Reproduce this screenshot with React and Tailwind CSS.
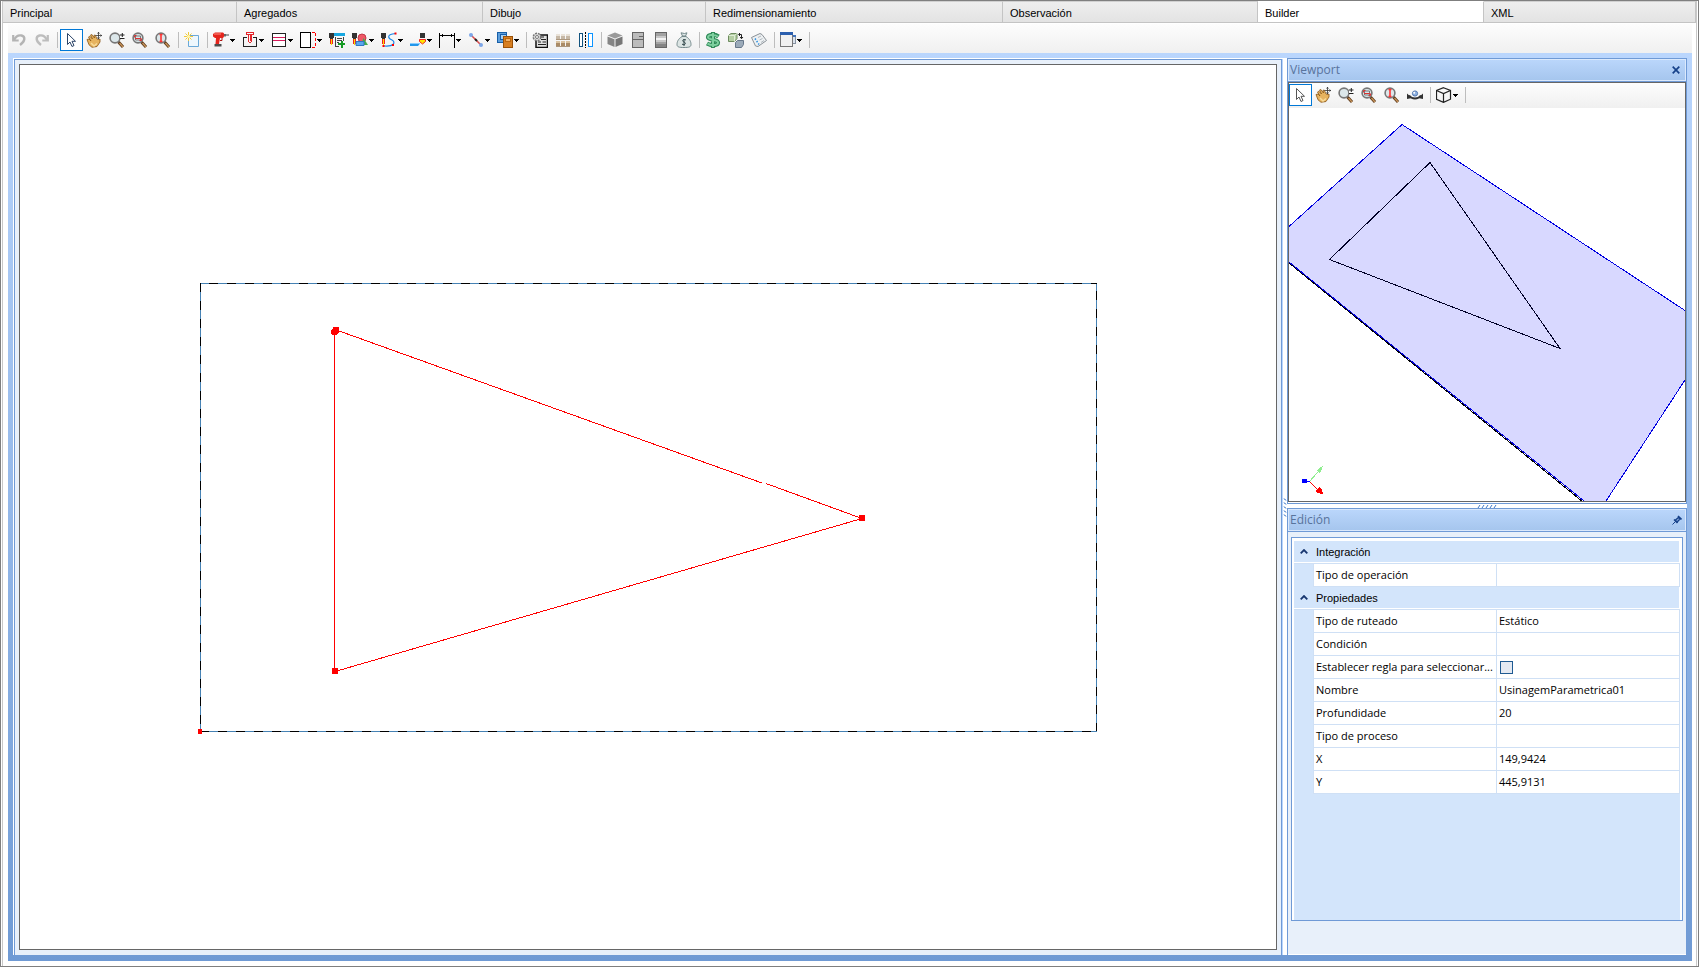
const TABS = [
  { label: 'Principal', width: 'w-[234px]' },
  { label: 'Agregados', width: 'w-[246px]' },
  { label: 'Dibujo', width: 'w-[223px]' },
  { label: 'Redimensionamiento', width: 'w-[297px]' },
  { label: 'Observación', width: 'w-[255px]' },
  { label: 'Builder', width: 'w-[226px]', active: true },
  { label: 'XML', width: 'flex-1' },
]

/* ---------- icons ---------- */

const Svg = ({ children, crisp }) => (
  <svg viewBox="0 0 16 16" className="size-4 shrink-0" fill="none" shapeRendering={crisp ? 'crispEdges' : 'auto'} aria-hidden="true">
    {children}
  </svg>
)

const Undo = () => (
  <Svg>
    <path d="M2.200 3v5.500h5.500" stroke="#b4b4b4" strokeWidth="2.200" />
    <path d="M3 8C5 4 8 3 10.500 3.500c4 1 4 5.500-1.500 9.500" stroke="#b4b4b4" strokeWidth="2.400" />
  </Svg>
)

const Redo = () => (
  <Svg>
    <path d="M13.800 3v5.500H8.300" stroke="#bdbdbd" strokeWidth="2.200" />
    <path d="M13 8C11 4 8 3 5.500 3.500c-4 1-4 5.500 1.500 9.500" stroke="#bdbdbd" strokeWidth="2.400" />
  </Svg>
)

const Cursor = ({ color = '#2b4468' }) => (
  <Svg>
    <path d="M4.500 1.500v11l2.500-2.500 2 4.500 2-1-2-4.200h3.500z" fill="#fff" stroke={color} />
  </Svg>
)

const Hand = () => (
  <Svg>
    <path d="M1 7.500 3 7l2 2-2.500-4 1.300-.8L6.500 7 4.500 3l1.400-.5L8.500 6 8 3.200h1.300L11 7l2 .5 1-.5v3l-3 4.500-5 .8-3-2.500z" fill="#e6b35f" stroke="#8a5514" strokeWidth=".8" />
    <path d="m5 11 3 3 3-2.500" stroke="#f8dc9c" strokeWidth="1.500" />
    <path d="M12.500 0v7M9.500 3.500H16M11.500 1.500l1-1.200 1 1.200M11.500 5.500l1 1.200 1-1.200M14.500 2.500l1.200 1-1.200 1" stroke="#333" strokeWidth=".8" />
  </Svg>
)

const Lens = ({ children }) => (
  <Svg>
    <path d="m9.500 10 4.500 5" stroke="#5c3a1c" strokeWidth="3" />
    <path d="m10.500 11 3.500 4" stroke="#c9955a" strokeWidth="1.300" />
    <circle cx="6" cy="6" r="4.900" fill="#dce7ea" stroke="#777" strokeWidth="1.600" />
    {children}
  </Svg>
)

const ZoomPlusMinus = () => (
  <Lens>
    <path d="M11 0h5v7h-5z" fill="#fcfcfc" />
    <path d="M11 3h4.500M13.300 1v4M11 6.500h4.500" stroke="#222" />
  </Lens>
)

const ZoomWindow = () => (
  <Lens>
    <path d="M3.500 4h5v4h-5z" stroke="#777" />
    <path d="M2.500 5.500v-2h2M9.500 6.500v2h-2M3 6.500h6" stroke="#d33" />
  </Lens>
)

const ZoomHeight = () => (
  <Lens>
    <path d="M6 2.500v7M4.500 2.500h3M4.500 9.500h3" stroke="#f33" strokeWidth="1.600" />
  </Lens>
)

const NewSheet = () => (
  <Svg>
    <path d="M4.500 3.500h10v11h-10z" fill="#eef7fd" stroke="#6aa9d8" />
    <path d="M4.500 0v9M0 4.500h9M1.500 1.500l6 6M7.500 1.500l-6 6" stroke="#efc93b" />
    <circle cx="4.500" cy="4.500" r="1.600" fill="#fff6b0" />
  </Svg>
)

const Drill = () => (
  <Svg>
    <path d="M0 2 2 .5h8l1 1v3l-1 1.500H2L0 4.500z" fill="#e4241c" />
    <path d="M1 2h7" stroke="#ff8d80" />
    <path d="M11 2h2v2.500h-2z" fill="#666" />
    <path d="M13 3h3" stroke="#444" />
    <path d="M3 6h4l-1 6H2.500z" fill="#e4241c" />
    <path d="M7 8.500h2V6" stroke="#b21510" />
    <path d="M1.500 12h7v2.500h-7z" fill="#4d4d4d" />
  </Svg>
)

const BoreHole = () => (
  <Svg crisp>
    <path d="M5 5.500H1.500v9h13v-9H11" stroke="#222" />
    <path d="M4.500.500h7v2h-7zM6.500 3v7M9.500 3v7M7 10.500h2M8 3v6" stroke="#e3262c" />
  </Svg>
)

const Grooves = () => (
  <Svg crisp>
    <path d="M1.500 1.500h13v13h-13z" fill="#fff" stroke="#222" />
    <path d="M2 5.500h12M2 8.500h12" stroke="#d81b5b" />
  </Svg>
)

const EdgeBand = () => (
  <Svg crisp>
    <path d="M.5.500h10v15H.5z" fill="#fff" stroke="#000" />
    <path d="M12 .5h3M12 15.500h3M15.500 1v15" stroke="#f00" strokeDasharray="3 2" />
  </Svg>
)

const Bit = () => (
  <>
    <path d="M0 1h5v5H4v2H1V6H0z" fill="#333" />
    <path d="M1 7h3v5H1z" fill="#e22" />
    <path d="M2 7h1v6H2z" fill="#ffd800" />
  </>
)

const RouteList = () => (
  <Svg crisp>
    <Bit />
    <path d="M5 1h11v3H5z" fill="#18a7e0" />
    <path d="M6.500 5v9H10M14.500 5v4M8 6.500h5M8 8.500h5M8 10.500h2" stroke="#444" />
    <path d="M9 12h7M12.500 9v7" stroke="#159a22" strokeWidth="2" />
  </Svg>
)

const RouteShapes = () => (
  <Svg>
    <circle cx="10" cy="6" r="4" fill="#ef5866" stroke="#c23b49" />
    <Bit />
    <path d="m11.500 6 4.500 7H9z" fill="#43ad4d" />
    <path d="M4 9.500h8v4H4z" fill="#5aa6f0" stroke="#2f77c4" />
  </Svg>
)

const RoutePath = () => (
  <Svg>
    <Bit />
    <path d="M14.500 1.500C4 2.500 8 7 11 8c4 2 2 7-8 6" stroke="#1c86e8" strokeWidth="1.200" />
    <path d="M13.500.500h2v2h-2zM1.500 13h2v2h-2zM11 12h2v2h-2z" fill="#f00" />
  </Svg>
)

const Chamfer = () => (
  <Svg>
    <path d="M10 1h5v5h-5z" fill="#333" />
    <path d="M9.500 7.500h6v2L12.500 12l-3-2.500z" fill="#ffe400" stroke="#e22" />
    <path d="M0 11.500h10L8 14H0z" fill="#2296ea" />
    <path d="M0 11.500h10" stroke="#86ccff" />
  </Svg>
)

const Dimension = () => (
  <Svg crisp>
    <path d="M.5.500v15M15.500.500v15M1 3.500h14M3.500 2v3M12.500 2v3" stroke="#000" />
  </Svg>
)

const Segment = () => (
  <Svg>
    <path d="m3 3 10 10" stroke="#d94a4a" strokeWidth="1.500" />
    <path d="m7 7 2 2" stroke="#222" strokeWidth="2" />
    <circle cx="3" cy="3" r="2" fill="#7da7e8" />
    <circle cx="13" cy="13" r="2" fill="#7da7e8" />
  </Svg>
)

const Layers = () => (
  <Svg crisp>
    <path d="M.5.500h9v10h-9z" fill="#5e9fdc" stroke="#175fa8" />
    <path d="M3.500 2.500h6v5h-6z" fill="#a8d1f5" stroke="#175fa8" />
    <path d="M6.500 4.500h9v11h-9z" fill="#d77f22" stroke="#9b5208" />
    <path d="M8.500 6.500h5v3h-5z" fill="#f4b266" stroke="#b9660f" />
  </Svg>
)

const GearList = () => (
  <Svg>
    <path d="M4 3h11.500v12.500H4z" fill="#e0e0e0" stroke="#111" strokeWidth="1.500" />
    <path d="M9 5h3M9 7.500h5M6 10h3M10.500 10H14M6 12.500h8" stroke="#222" />
    <circle cx="5" cy="5" r="3.700" fill="#ddd" stroke="#777" strokeWidth="1.500" strokeDasharray="2 1" />
    <circle cx="5" cy="5" r="1.500" fill="#fff" stroke="#777" />
  </Svg>
)

const Box = ({ x, y, light, dark }) => (
  <>
    <path d={`M${x} ${y}h4v2h-4z`} fill={light} />
    <path d={`M${x} ${y + 2}h4v3h-4z`} fill={dark} />
  </>
)

const Boxes = () => (
  <Svg crisp>
    {[1, 6, 11].map((x) => (
      <g key={x}>
        <Box x={x} y={2} light="#e9e2d8" dark="#c6b8a6" />
        <Box x={x} y={9} light="#d9c2a0" dark="#aa8b66" />
      </g>
    ))}
    <path d="M1 7.500h14M1 14.500h14" stroke="#ab967d" />
  </Svg>
)

const Mirror = () => (
  <Svg crisp>
    <path d="M1.500 1.500h3v13h-3z" fill="#fff" stroke="#12537f" />
    <path d="M7.500 0v16" stroke="#000" strokeDasharray="2 1" />
    <path d="M10.500 1.500h4v13h-4z" fill="#fff" stroke="#0c94ff" />
  </Svg>
)

const SolidCube = () => (
  <Svg>
    <path d="m8 .5 7.500 3L8 6.500.5 3.500z" fill="#9a9a9a" />
    <path d="M.5 4.500 7.500 7.300V15l-7-3z" fill="#858585" />
    <path d="M15.500 4.500 8.500 7.300V15l7-3z" fill="#777" />
  </Svg>
)

const Cabinet = () => (
  <Svg crisp>
    <path d="M2.500.500h11v15h-11z" fill="#bcbcbc" stroke="#666" />
    <path d="M3 7.500h10M9 4.500h4" stroke="#666" />
  </Svg>
)

const Cylinder = () => (
  <Svg crisp>
    <path d="M2.500.500h11v15h-11z" fill="#a3a3a3" stroke="#666" />
    <path d="M3 4h10v6H3z" fill="#c9c9c9" />
    <path d="M3 6h10v2H3z" fill="#f4f4f4" />
    <path d="M3 12h10v3H3z" fill="#858585" />
  </Svg>
)

const MoneyBag = () => (
  <Svg>
    <path d="M6 4.500C2 7 1 10 1 12.500 1 15 3 15.500 8 15.500s7-.5 7-3c0-2.500-1-5.500-5-8z" fill="#dce5e4" stroke="#74898b" />
    <path d="M5 .8 6.500 4h3L11 .8 8.500 1.500z" fill="#dfe8e8" stroke="#74898b" />
    <path d="M10 8C7 6.500 5.500 9 8 10s1.500 3.500-2 2.200M8 7v7" stroke="#2f4548" />
  </Svg>
)

const Dollar = () => (
  <Svg>
    <path d="M13.500 4.500C10 2 3 2 3 5.300 3 8.500 13 7 13 10.500 13 14 5.500 13.500 2 11.500M8 0v16" stroke="#2f8a58" strokeWidth="4.200" />
    <path d="M13 4.500C10 2.500 3 2 3 5.300 3 8.500 13 7 13 10.500 13 14 5.500 13.500 2.500 11.700M8 1v14" stroke="#7fd0a0" strokeWidth="2" />
  </Svg>
)

const SwapBlocks = () => (
  <Svg>
    <path d="M.5 3.500 3 1.500h6v5l-2.500 3h-6z" fill="#b5cfa4" stroke="#6d8b5e" />
    <path d="M.5 3.500h6v6M6.500 3.500 9 1.500" stroke="#e0eed8" />
    <path d="m7.500 10.500 2-2h6v4l-2 3h-6z" fill="#9baab9" stroke="#66778a" />
    <path d="M11 2.500h2.500v4M12 5l1.500 1.700L15 5M12 1l-1.500 1.500L12 4" stroke="#222" />
  </Svg>
)

const Sheet = () => (
  <Svg>
    <path d="M.5 5.500 9 1.500l2 1 4.500 6L7 14.500 4.500 14z" fill="#edf0f2" stroke="#8a9197" />
    <path d="m4 6.500 4 6" stroke="#2c8fe0" strokeDasharray="1.500 1.500" strokeWidth="1.500" />
    <path d="m7 5.500 3-1.500M8.500 8l3-1.500M10 10.500l3-2" stroke="#b0b8be" />
  </Svg>
)

const Windows = () => (
  <Svg crisp>
    <path d="M3.500 3.500h12v8h-12z" fill="#dce3ec" stroke="#8792a1" />
    <path d="M9 3h7v2H9z" fill="#3f73bd" />
    <path d="M.5.500h12v14H.5z" fill="#f1f1f1" stroke="#777" />
    <path d="M0 0h13v3H0z" fill="#2c5fae" />
  </Svg>
)

const Orbit = () => (
  <Svg>
    <path d="M2 8.500c3 4 9 4 12 0" stroke="#333" strokeWidth="2" />
    <path d="M0 12V6.500L5 11zM16 12V6.500L11 11z" fill="#333" />
    <circle cx="8" cy="6.500" r="2.600" fill="#8fb2e2" stroke="#5679b0" />
    <circle cx="7.200" cy="5.700" r="1" fill="#fff" />
  </Svg>
)

const WireCube = () => (
  <Svg>
    <path d="M7.500.700 14.500 3.500v8.700l-7 3.200-7-3.200V3.500zM.5 3.500l7 3 7-3M7.500 6.500v9" stroke="#222" strokeWidth="1.200" />
  </Svg>
)

/* ---------- toolbars ---------- */

const ToolButton = ({ icon, label, selected, menu }) => (
  <button
    type="button"
    aria-label={label}
    aria-pressed={selected}
    aria-haspopup={menu ? 'menu' : undefined}
    className={`flex h-[22px] shrink-0 items-center gap-px border pl-0.5 ${menu ? 'w-[29px]' : 'w-[23px]'} ${selected ? 'border-[#0078d7] bg-white' : 'border-transparent'}`}
  >
    {icon}
    {menu && (
      <svg viewBox="0 0 5 3" className="h-[3px] w-[5px] shrink-0" shapeRendering="crispEdges" aria-hidden="true">
        <path d="M0 0h5v1H0zM1 1h3v1H1zM2 2h1v1H2z" fill="#000" />
      </svg>
    )}
  </button>
)

const Separator = () => (
  <div className="w-1.5 shrink-0 pl-[3px]">
    <div className="h-4 w-px bg-[#bdbdbd]" />
  </div>
)

const TOOLS = [
  { label: 'Deshacer', icon: <Undo /> },
  { label: 'Rehacer', icon: <Redo /> },
  null,
  { label: 'Seleccionar', icon: <Cursor />, selected: true },
  { label: 'Mover vista', icon: <Hand /> },
  { label: 'Zoom', icon: <ZoomPlusMinus /> },
  { label: 'Zoom ventana', icon: <ZoomWindow /> },
  { label: 'Zoom extensión', icon: <ZoomHeight /> },
  null,
  { label: 'Nuevo', icon: <NewSheet /> },
  null,
  { label: 'Taladro', icon: <Drill />, menu: true },
  { label: 'Perforación', icon: <BoreHole />, menu: true },
  { label: 'Ranura', icon: <Grooves />, menu: true },
  { label: 'Canto', icon: <EdgeBand />, menu: true },
  { label: 'Lista de ruteados', icon: <RouteList /> },
  { label: 'Formas', icon: <RouteShapes />, menu: true },
  { label: 'Ruteado', icon: <RoutePath />, menu: true },
  { label: 'Chaflán', icon: <Chamfer />, menu: true },
  { label: 'Cota', icon: <Dimension />, menu: true },
  { label: 'Línea', icon: <Segment />, menu: true },
  { label: 'Orden', icon: <Layers />, menu: true },
  null,
  { label: 'Configurar lista', icon: <GearList /> },
  { label: 'Módulos', icon: <Boxes /> },
  { label: 'Espejo', icon: <Mirror /> },
  null,
  { label: 'Sólido', icon: <SolidCube /> },
  { label: 'Gabinete', icon: <Cabinet /> },
  { label: 'Cilindro', icon: <Cylinder /> },
  { label: 'Costo', icon: <MoneyBag /> },
  null,
  { label: 'Precio', icon: <Dollar /> },
  { label: 'Reemplazar', icon: <SwapBlocks /> },
  { label: 'Hoja', icon: <Sheet /> },
  null,
  { label: 'Ventanas', icon: <Windows />, menu: true },
  null,
]

const VIEW_TOOLS = [
  { label: 'Seleccionar', icon: <Cursor color="#555" />, selected: true },
  { label: 'Mover vista', icon: <Hand /> },
  { label: 'Zoom', icon: <ZoomPlusMinus /> },
  { label: 'Zoom ventana', icon: <ZoomWindow /> },
  { label: 'Zoom extensión', icon: <ZoomHeight /> },
  { label: 'Orbitar', icon: <Orbit /> },
  null,
  { label: 'Vista', icon: <WireCube />, menu: true },
  null,
]

const Toolbar = ({ items, label, className }) => (
  <div role="toolbar" aria-label={label} className={`flex shrink-0 items-center bg-linear-to-b from-[#fdfdfd] to-[#f0f0f0] ${className}`}>
    {items.map((item, i) => (item ? <ToolButton key={i} {...item} /> : <Separator key={i} />))}
  </div>
)

/* ---------- drawings ---------- */

const Drawing = () => (
  <svg viewBox="0 0 1256 884" className="size-full" fill="none" shapeRendering="crispEdges" role="img" aria-label="Pieza">
    <path d="M180.500 218.500h896v448h-896z" stroke="#4682b4" />
    <path d="M189 218.500h888M180.500 218v448M1076.500 226v440" stroke="#000" strokeDasharray="9 9" />
    <path d="M180 666.500h897" stroke="#000" strokeDasharray="9 9" />
    <path d="M178 664h4v5h-4z" fill="#f00" />
    <path d="M314.500 267v339M315 264.500 742 418M746 418.500 842 453.500 315 606.500" stroke="#f00" />
    <path d="M313 262h6v6h-6zM312 603h6v6h-6zM839 450h6v6h-6z" fill="#f00" />
    <circle cx="314.500" cy="267" r="3.500" fill="#f00" />
  </svg>
)

const Scene = () => (
  <svg viewBox="0 0 396 393" className="size-full" fill="none" shapeRendering="crispEdges" role="img" aria-label="Vista 3D">
    <path d="M0 118 113 16.500l283 186V272l-79 121h-22L0 154z" fill="#d8d8ff" />
    <path d="m0 155 294 239" stroke="#000" />
    <path d="M0 118.500 113 16.500l283 186M396 272l-79 121M0 154l295 239" stroke="#0000e0" />
    <path d="m141 54.500 130 186-230.500-89z" stroke="#000028" />
    <path d="M20.500 373.500 34 358" stroke="#90ee90" />
    <path d="m34 358-2 6-2 1-2-2 2-3z" fill="#90ee90" />
    <path d="m20.500 373.500 9 9" stroke="#f00" />
    <path d="m34 386-6-1-1-3 3-3 3 2z" fill="#f00" />
    <path d="M13 371h5v4h-5z" fill="#00f" />
    <path d="M18 373.500h3" stroke="#00f" />
  </svg>
)

/* ---------- side panes ---------- */

const PaneHeader = ({ title, children }) => (
  <header className="flex h-[22px] shrink-0 items-center justify-between border border-[#dbe9fc] bg-linear-to-b from-[#bad6fb] to-[#a6c6ee] pr-[3px] pl-px text-[12px] leading-4 text-[#58739c]">
    <h2>{title}</h2>
    {children}
  </header>
)

const PROPERTIES = [
  { name: 'Integración', rows: [['Tipo de operación', '']] },
  {
    name: 'Propiedades',
    rows: [
      ['Tipo de ruteado', 'Estático'],
      ['Condición', ''],
      ['Establecer regla para seleccionar...', false],
      ['Nombre', 'UsinagemParametrica01'],
      ['Profundidade', '20'],
      ['Tipo de proceso', ''],
      ['X', '149,9424'],
      ['Y', '445,9131'],
    ],
  },
]

const Group = ({ name, rows }) => (
  <tbody>
    <tr className="h-[23px]">
      <th colSpan={3} scope="colgroup" className="border-b border-[#cfe0f5] p-0 text-left font-normal">
        <button type="button" aria-expanded="true" className="flex h-[22px] w-full items-center gap-2 border-r border-b border-white pl-[6px] font-['Liberation_Sans',sans-serif] text-[11px] leading-4">
          <svg viewBox="0 0 8 5" className="h-[5px] w-2" fill="none" aria-hidden="true">
            <path d="m.7 4.300 3.300-3.300 3.300 3.300" stroke="#17366f" strokeWidth="1.800" />
          </svg>
          {name}
        </button>
      </th>
    </tr>
    {rows.map(([label, value]) => (
      <tr key={label} className="h-[23px]">
        <td className="p-0" />
        <th scope="row" className="border-b border-l border-[#cfe0f5] bg-white p-0 pl-0.5 text-left font-normal whitespace-nowrap">
          {value === false ? <label htmlFor="regla">{label}</label> : label}
        </th>
        <td className="border-x border-b border-[#cfe0f5] bg-white p-0 pl-0.5">
          {value === false ? (
            <input id="regla" type="checkbox" className="ml-px block size-[13px] appearance-none border border-[#1f5a92] bg-[#e4e9f2]" />
          ) : (
            value
          )}
        </td>
      </tr>
    ))}
  </tbody>
)

const ViewportPane = () => (
  <section className="flex h-[446px] shrink-0 flex-col border border-[#6f9ad6] bg-white">
    <PaneHeader title="Viewport">
      <button type="button" aria-label="Cerrar" className="p-0.5">
        <svg viewBox="0 0 8 8" className="size-2" aria-hidden="true">
          <path d="m.7.700 6.600 6.600M7.300.700.7 7.300" stroke="#17428a" strokeWidth="1.700" />
        </svg>
      </button>
    </PaneHeader>
    <div className="flex min-h-0 flex-1 flex-col border-t border-[#6f9ad6] pb-px">
      <div className="flex min-h-0 flex-1 flex-col border border-[#666]">
        <Toolbar items={VIEW_TOOLS} label="Viewport" className="h-[25px] pb-px" />
        <div className="min-h-0 flex-1">
          <Scene />
        </div>
      </div>
    </div>
  </section>
)

const Grip = ({ className }) => (
  <svg viewBox="0 0 20 3" className={className} stroke="#3f78c8" aria-hidden="true">
    <path d="m1 3 2-3M5 3l2-3M9 3l2-3M13 3l2-3M17 3l2-3" />
  </svg>
)

const EditPane = () => (
  <section className="flex min-h-0 flex-1 flex-col border border-b-0 border-[#6f9ad6] bg-[#e8f0fa]">
    <PaneHeader title="Edición">
      <button type="button" aria-label="Fijar panel">
        <svg viewBox="0 0 10 10" className="size-2.5" fill="none" aria-hidden="true">
          <path d="M.5 9.500 4 6" stroke="#17428a" />
          <path d="M2 4.500 5.500 8M6 1l3.500 3.500" stroke="#17428a" strokeWidth="1.600" />
          <path d="m3.500 5 3-2.500L8 4 5.200 7z" fill="#8fb0e0" stroke="#17428a" strokeWidth="1.300" />
        </svg>
      </button>
    </PaneHeader>
    <div className="flex min-h-0 flex-1 flex-col border-t border-b border-t-[#6f9ad6] border-b-white px-[3px] pt-[5px] pb-[33px]">
      <div className="flex-1 border border-[#6f9ad6] bg-white px-0.5 pt-[3px]">
        <div className="h-full bg-[#d3e5fb]">
          <table className="w-full table-fixed border-separate border-spacing-0 text-[11px] leading-4 text-black">
            <colgroup>
              <col className="w-[19px]" />
              <col className="w-[183px]" />
              <col />
            </colgroup>
            {PROPERTIES.map((group) => (
              <Group key={group.name} {...group} />
            ))}
          </table>
        </div>
      </div>
    </div>
  </section>
)

const App = () => {
  return (
    <div className="h-screen bg-white pr-[5px] pb-[6px] font-['Open_Sans',sans-serif]">
      <div className="flex h-full flex-col border border-[#7f7f7f]">
        <div className="mx-px flex min-h-0 flex-1 flex-col border-x border-[#c8c8c8]">
          <nav role="tablist" className="flex h-[22px] shrink-0 border-b border-[#c4c4c4] font-['Liberation_Sans',sans-serif] text-[11px] leading-4 text-black">
            {TABS.map(({ label, width, active }) => (
              <button
                key={label}
                type="button"
                role="tab"
                aria-selected={!!active}
                className={`${width} border-t border-r border-r-[#c4c4c4] pt-px pl-[7px] text-left ${active ? 'border-t-white bg-white' : 'border-t-[#d0d0d0] bg-linear-to-b from-[#eeeeee] to-[#e3e3e3]'}`}
              >
                {label}
              </button>
            ))}
          </nav>

          <main className="flex min-h-0 flex-1 flex-col pr-1 pb-[5px] pl-[5px]">
            <Toolbar items={TOOLS} label="Builder" className="mt-px h-[29px] pt-[3px]" />
            <div className="flex min-h-0 flex-1 bg-linear-to-b from-[#bad6fd] to-[#6f9ad4] px-[5px] pt-[5px] pb-[6px]">
              <div className="flex min-h-0 min-w-0 flex-1 border-t border-l border-white">
                <section className="min-w-0 flex-1 border border-b-0 border-[#6f9ad6] bg-[#e8f0fa] p-1 pb-[5px]">
                  <div className="h-full border border-[#666] bg-white">
                    <Drawing />
                  </div>
                </section>
                <div className="flex w-[5px] items-center justify-center border-l border-[#bad6fd] bg-white">
                  <Grip className="h-[3px] w-5 shrink-0 rotate-90" />
                </div>
              </div>
              <div className="flex w-[400px] shrink-0 flex-col">
                <ViewportPane />
                <div className="flex h-1 shrink-0 items-center justify-center bg-white">
                  <Grip className="h-[3px] w-5" />
                </div>
                <EditPane />
              </div>
            </div>
          </main>
        </div>
      </div>
    </div>
  )
}

export default App
